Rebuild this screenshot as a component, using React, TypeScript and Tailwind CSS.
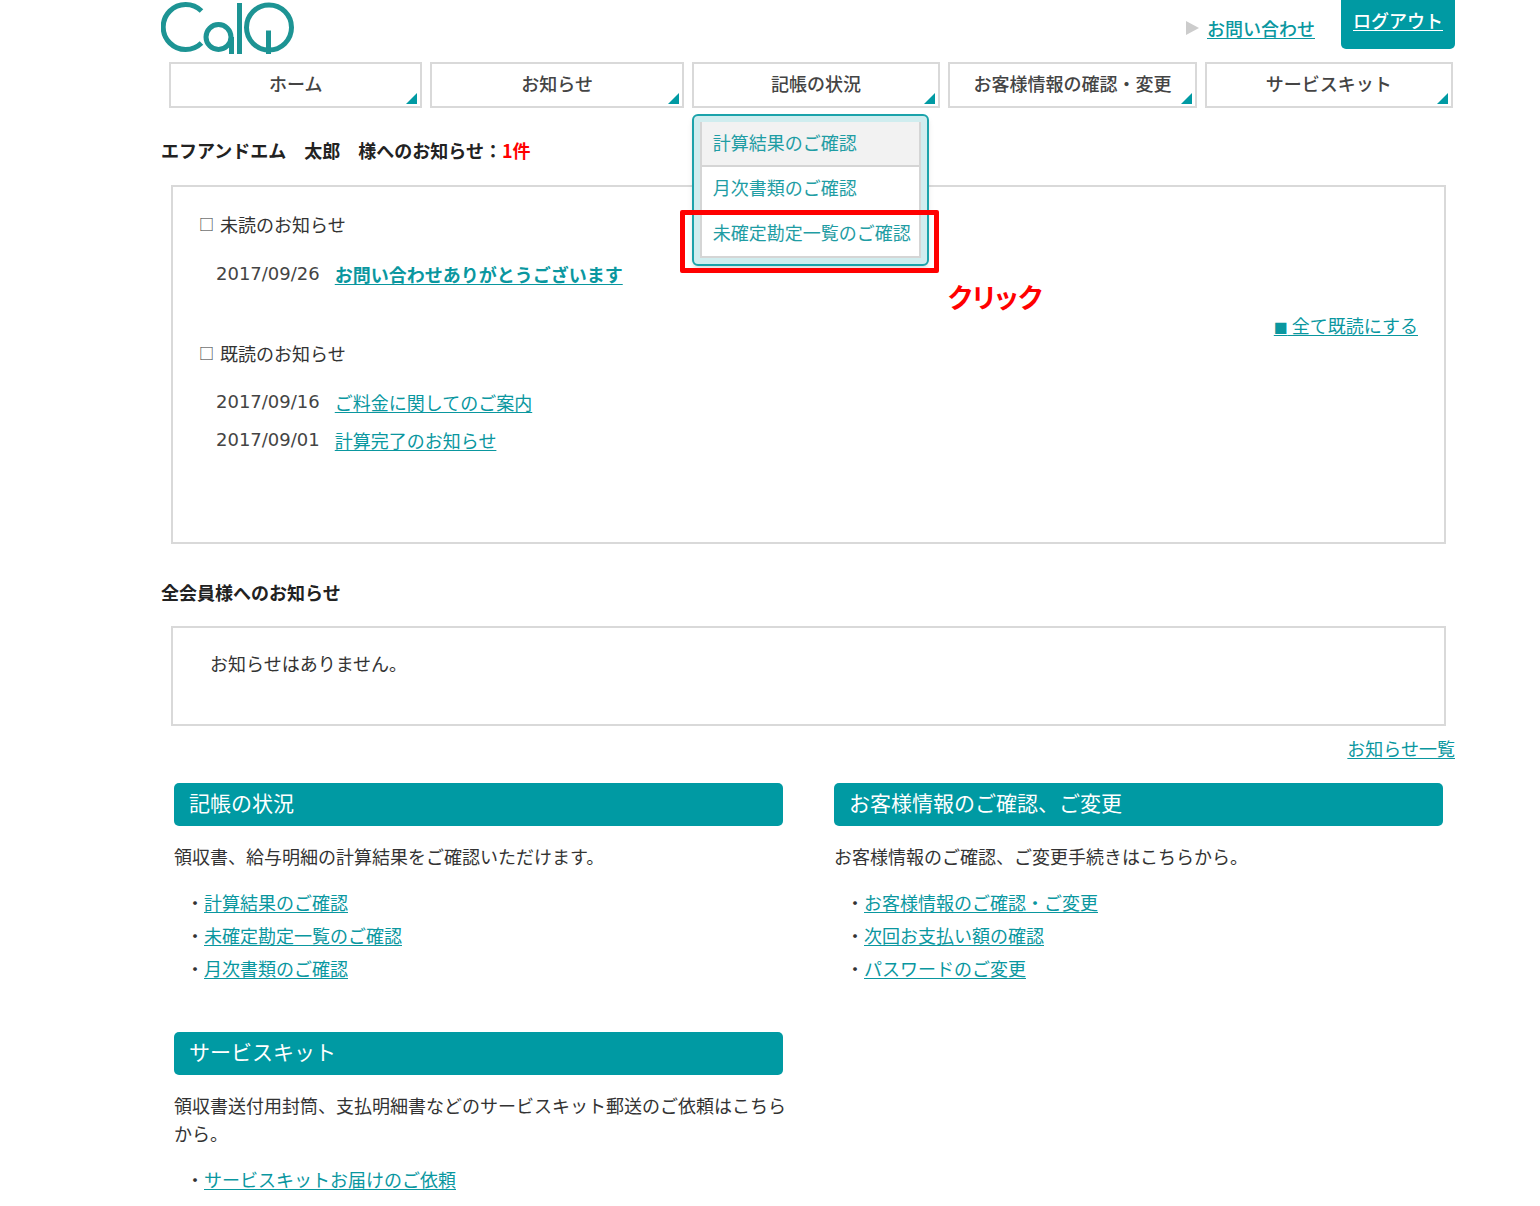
import React from "react";

const link = "text-[#0a979f] underline underline-offset-2 decoration-1";

function Logo() {
  return (
    <svg width="134" height="56" viewBox="0 0 134 56" fill="none" stroke="#1d9494" strokeWidth="5" role="img" aria-label="CalQ">
      <path d="M40.5 11 A22.5 22.5 0 1 0 40.5 43" />
      <circle cx="57.500" cy="37" r="12.500" />
      <path d="M70.500 37 V54" />
      <path d="M78.500 3 V54" />
      <circle cx="108" cy="27.500" r="22.500" />
      <path d="M107.500 30.500 V54" />
    </svg>
  );
}

function NavItem({ label, children }: { label: string; children?: React.ReactNode }) {
  return (
    <li className="relative">
      <a
        href="#"
        className="relative flex h-[46px] items-center justify-center border-2 border-[#d9d9d9] bg-white pb-1 text-lg font-medium text-[#444]"
      >
        {label}
        <svg className="absolute right-[3px] bottom-0.5" width="11" height="11" viewBox="0 0 11 11" aria-hidden="true">
          <path d="M11 0V11H0Z" fill="#009aa3" />
        </svg>
      </a>
      {children}
    </li>
  );
}

const subLink = "block py-1.5 pl-[11px] text-lg whitespace-nowrap text-[#1f9da4]";

function Submenu() {
  return (
    <div className="absolute top-[52px] left-0 z-10 w-[237px] rounded-md border-2 border-[#1ba3ab] bg-[#d0edef] p-1.5 shadow-md">
      <ul className="border-x-2 border-b-2 border-[#d5d5d5] bg-white">
        <li className="h-[45px] border-b-2 border-[#d5d5d5] bg-[#f2f2f2]">
          <a href="#" className={subLink}>計算結果のご確認</a>
        </li>
        <li className="h-[45px]">
          <a href="#" className={subLink}>月次書類のご確認</a>
        </li>
        <li className="relative h-11">
          <a href="#" className={subLink}>未確定勘定一覧のご確認</a>
          <div className="absolute -top-[2px] -left-[22px] h-[63px] w-[259px] rounded-xs border-5 border-[#f00]" />
          <strong className="absolute top-[64px] left-[246px] text-[27px] whitespace-nowrap text-[#f00] [font-feature-settings:'palt']">
            クリック
          </strong>
        </li>
      </ul>
    </div>
  );
}

function NoticeHeading({ children }: { children: React.ReactNode }) {
  return (
    <h2 className="flex h-7 items-center gap-1.5">
      <span className="text-[15px]">□</span>
      {children}
    </h2>
  );
}

function NoticeRow({ date, title, bold }: { date: string; title: string; bold?: boolean }) {
  return (
    <li className="flex h-[38px] items-center gap-[15px] pl-[17px]">
      <time className="font-['DejaVu_Sans',sans-serif] text-[#444]">{date}</time>
      <a href="#" className={bold ? `${link} font-bold` : link}>{title}</a>
    </li>
  );
}

function Section({ title, text, links }: { title: string; text: string; links: string[] }) {
  return (
    <section>
      <h2 className="h-[43px] rounded-[5px] bg-[#009aa3] pl-[15px] text-[21px] leading-[38px] text-white">{title}</h2>
      <p className="-mr-2 mt-4 leading-7">{text}</p>
      <ul className="mt-4 pl-3">
        {links.map((l) => (
          <li key={l} className="flex leading-[33px]">
            <span aria-hidden="true">・</span>
            <a href="#" className={link}>{l}</a>
          </li>
        ))}
      </ul>
    </section>
  );
}

export default function App() {
  return (
    <div className="min-h-screen overflow-x-hidden bg-white pr-[85px] pl-[161px] font-['Noto_Sans_CJK_JP',sans-serif] text-lg text-[#333]">
      <header>
        <div className="flex h-[62px] justify-between">
          <Logo />
          <div className="flex items-start gap-[26px]">
            <div className="flex items-center gap-2 pt-3.5">
              <svg width="13" height="14" viewBox="0 0 13 14" aria-hidden="true">
                <path d="M0 0L13 7L0 14Z" fill="#ccc" />
              </svg>
              <a href="#" className={`${link} font-medium`}>お問い合わせ</a>
            </div>
            <a href="#" className="h-[49px] rounded-b-[5px] bg-[#009aa3] px-3 pt-1.5 font-medium text-white underline underline-offset-2">
              ログアウト
            </a>
          </div>
        </div>
        <nav className="pr-0.5 pl-2">
          <ul className="grid grid-cols-[254fr_254fr_249fr_249fr_249fr] gap-2">
            <NavItem label="ホーム" />
            <NavItem label="お知らせ" />
            <NavItem label="記帳の状況">
              <Submenu />
            </NavItem>
            <NavItem label="お客様情報の確認・変更" />
            <NavItem label="サービスキット" />
          </ul>
        </nav>
      </header>

      <main>
        <h1 className="mt-7 font-bold text-[#222]">
          エフアンドエム　太郎　様へのお知らせ：<span className="text-[#f00]">1件</span>
        </h1>
        <section className="mt-[21px] mr-[9px] ml-2.5 h-[359px] border-2 border-[#d9d9d9] px-[26px] pt-[23px]">
          <NoticeHeading>未読のお知らせ</NoticeHeading>
          <ul className="mt-[17px]">
            <NoticeRow date="2017/09/26" title="お問い合わせありがとうございます" bold />
          </ul>
          <p className="mt-5 text-right leading-6">
            <a href="#" className={link}>
              <span className="text-[14px]">■</span> 全て既読にする
            </a>
          </p>
          <NoticeHeading>既読のお知らせ</NoticeHeading>
          <ul className="mt-4">
            <NoticeRow date="2017/09/16" title="ご料金に関してのご案内" />
            <NoticeRow date="2017/09/01" title="計算完了のお知らせ" />
          </ul>
        </section>

        <h1 className="mt-[34px] font-bold text-[#222]">全会員様へのお知らせ</h1>
        <section className="mt-5 mr-[9px] ml-2.5 h-[100px] border-2 border-[#d9d9d9] px-[37px] pt-[21px]">
          <p>お知らせはありません。</p>
        </section>
        <p className="mt-2 text-right">
          <a href="#" className={link}>お知らせ一覧</a>
        </p>

        <div className="mt-[21px] mr-3 ml-[13px] grid grid-cols-2 gap-x-[51px] gap-y-[47px]">
          <Section
            title="記帳の状況"
            text="領収書、給与明細の計算結果をご確認いただけます。"
            links={["計算結果のご確認", "未確定勘定一覧のご確認", "月次書類のご確認"]}
          />
          <Section
            title="お客様情報のご確認、ご変更"
            text="お客様情報のご確認、ご変更手続きはこちらから。"
            links={["お客様情報のご確認・ご変更", "次回お支払い額の確認", "パスワードのご変更"]}
          />
          <Section
            title="サービスキット"
            text="領収書送付用封筒、支払明細書などのサービスキット郵送のご依頼はこちらから。"
            links={["サービスキットお届けのご依頼"]}
          />
        </div>
      </main>
    </div>
  );
}
